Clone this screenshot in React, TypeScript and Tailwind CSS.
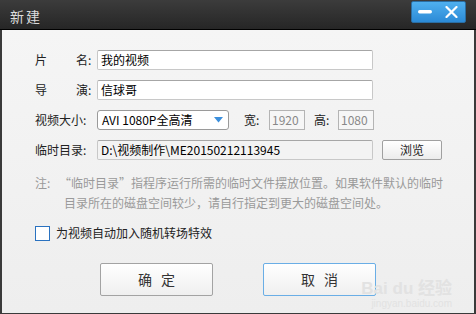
import React from "react";

const FONT = { fontFamily: '"SimSun", "Noto Sans CJK SC", sans-serif' };

function Field({ value, wide = true, gray = false }: { value: string; wide?: boolean; gray?: boolean }) {
  return (
    <div
      className={`flex h-[20px] items-center rounded-[2px] border border-[#c8c8c8] border-t-[#a6a6a6] px-[3px] text-[12px] text-black ${
        wide ? "w-[276px]" : "w-[35px]"
      } ${gray ? "bg-[#f3f3f3]" : "bg-white"}`}
    >
      {value}
    </div>
  );
}

function Row({ label, children }: { label: React.ReactNode; children: React.ReactNode }) {
  return (
    <div className="flex h-[20px] items-center">
      <div className="w-[62px] text-[12px] text-[#222]">{label}</div>
      {children}
    </div>
  );
}

export default function App() {
  return (
    <div className="flex h-[314px] w-[476px] flex-col overflow-hidden bg-[#3a3a3a]" style={FONT}>
      {/* title bar */}
      <div className="flex h-[29px] shrink-0 items-start justify-between bg-gradient-to-b from-[#3c3c3c] to-[#262626] pl-[10px] pr-[10px]">
        <span className="mt-[6px] text-[14px] tracking-[2px] text-[#dcdcdc]">新建</span>
        <div className="mt-[1px] flex h-[22px] w-[55px] items-center justify-between rounded-[2px] border border-[#2b6ea3] bg-gradient-to-b from-[#4fb0ef] to-[#2b8ad6] px-[6px]">
          <svg width="14" height="4" viewBox="0 0 14 4">
            <rect x="0" y="0" width="14" height="3.5" rx="1.7" fill="#fff" />
          </svg>
          <svg width="13" height="12" viewBox="0 0 13 12" className="mr-[1px]">
            <path d="M1.5 1 L11.5 11 M11.5 1 L1.5 11" stroke="#fff" strokeWidth="2.2" strokeLinecap="round" />
          </svg>
        </div>
      </div>
      <div className="h-[1px] shrink-0 bg-black" />
      {/* body */}
      <div className="relative mx-[2px] mb-[1px] flex flex-1 flex-col bg-gradient-to-b from-[#f5f5f5] to-[#eeeeee] pl-[33px] pt-[20px]">
        <div className="flex flex-col gap-[10px]">
          <Row label={<span>片<span className="inline-block w-[29px]" />名:</span>}>
            <Field value="我的视频" />
          </Row>
          <Row label={<span>导<span className="inline-block w-[29px]" />演:</span>}>
            <Field value="信球哥" />
          </Row>
          <Row label="视频大小:">
            <div className="flex h-[20px] w-[132px] items-center justify-between rounded-[3px] border border-[#9a9a9a] bg-white pl-[4px] pr-[5px] text-[12px] text-black">
              <span>AVI 1080P全高清</span>
              <svg width="9" height="6" viewBox="0 0 9 6">
                <path d="M0 0 H9 L4.5 5.5 Z" fill="#3c8fdc" />
              </svg>
            </div>
            <span className="ml-[15px] w-[25px] text-[12px] text-[#222]">宽:</span>
            <div className="flex h-[20px] w-[36px] items-center border border-[#b4b4b4] bg-[#f6f6f6] px-[2px] text-[12px] text-[#888]">1920</div>
            <span className="ml-[9px] w-[24px] text-[12px] text-[#222]">高:</span>
            <div className="flex h-[20px] w-[36px] items-center border border-[#b4b4b4] bg-[#f6f6f6] px-[2px] text-[12px] text-[#888]">1080</div>
          </Row>
          <Row label="临时目录:">
            <Field value="D:\视频制作\ME20150212113945" gray />
            <div className="ml-[9px] flex h-[20px] w-[60px] items-center justify-center rounded-[2px] border border-[#a0a0a0] bg-gradient-to-b from-[#ffffff] to-[#ececec] text-[12px] text-[#222]">
              浏览
            </div>
          </Row>
        </div>
        {/* note */}
        <div className="mt-[13px] flex text-[12px] leading-[20px] text-[#9a9a9a]">
          <span className="w-[24px] shrink-0">注:</span>
          <span className="w-[390px] whitespace-nowrap">
            “临时目录”指程序运行所需的临时文件摆放位置。如果软件默认的临时
            <br />
            <span className="ml-[5px]">目录所在的磁盘空间较少，请自行指定到更大的磁盘空间处。</span>
          </span>
        </div>
        {/* checkbox */}
        <div className="mt-[11px] flex items-center">
          <div className="h-[15px] w-[15px] border border-[#2a72c0] bg-white" />
          <span className="ml-[6px] text-[12px] text-[#222]">为视频自动加入随机转场特效</span>
        </div>
        {/* buttons */}
        <div className="mt-[21px] flex pl-[65px]">
          <div className="flex h-[33px] w-[113px] items-center justify-center rounded-[2px] border border-[#a3a3a3] bg-gradient-to-b from-[#ffffff] to-[#efefef] text-[14px] tracking-[9px] text-[#333]">
            <span className="ml-[9px]">确定</span>
          </div>
          <div className="ml-[50px] flex h-[33px] w-[113px] items-center justify-center rounded-[2px] border border-[#6aaee6] bg-gradient-to-b from-[#ffffff] to-[#efefef] text-[14px] tracking-[9px] text-[#333]">
            <span className="ml-[9px]">取消</span>
          </div>
        </div>
        {/* watermark */}
        <div className="absolute bottom-[3px] right-[22px] flex flex-col items-end text-[#e2e2e2]" style={{ fontFamily: '"Liberation Sans", "Noto Sans CJK SC", sans-serif' }}>
          <span className="text-[17px] font-bold leading-[18px]">Bai du 经验</span>
          <span className="text-[10px] leading-[12px]">jingyan.baidu.com</span>
        </div>
      </div>
    </div>
  );
}
